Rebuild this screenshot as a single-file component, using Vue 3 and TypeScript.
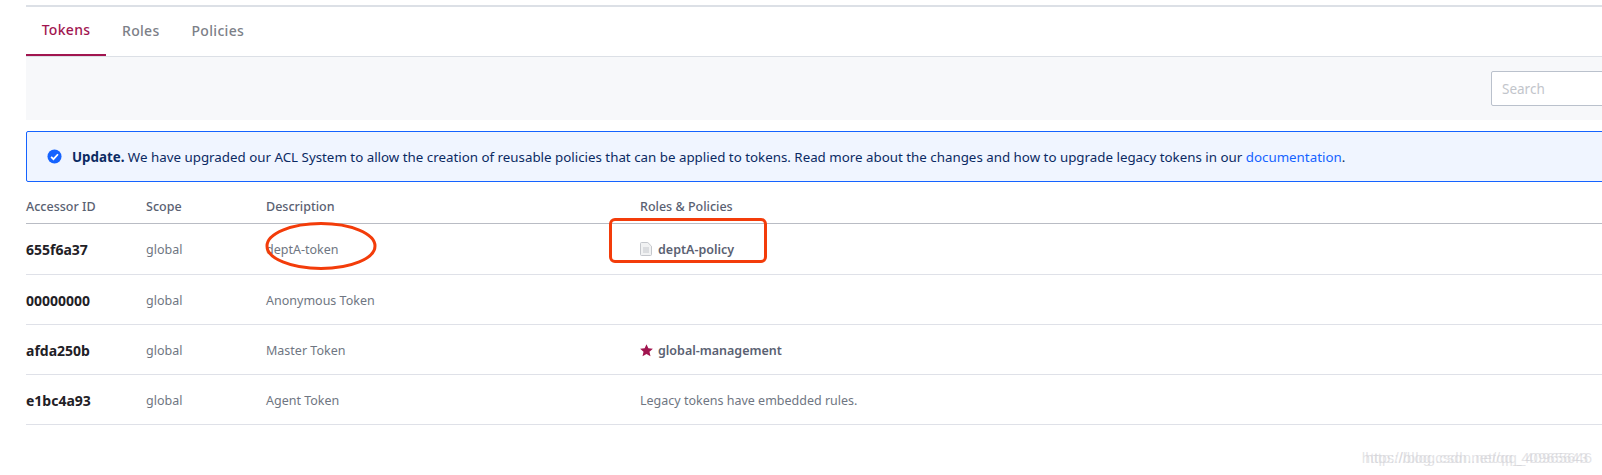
<script setup lang="ts">
interface TokenRow {
  id: string
  scope: string
  description: string
  policy?: string
  icon?: 'policy' | 'star'
  note?: string
}

const rows: TokenRow[] = [
  { id: '655f6a37', scope: 'global', description: 'deptA-token', policy: 'deptA-policy', icon: 'policy' },
  { id: '00000000', scope: 'global', description: 'Anonymous Token' },
  { id: 'afda250b', scope: 'global', description: 'Master Token', policy: 'global-management', icon: 'star' },
  { id: 'e1bc4a93', scope: 'global', description: 'Agent Token', note: 'Legacy tokens have embedded rules.' },
]
</script>

<template>
  <div class="page">
    <nav class="tabs">
      <a class="tab active">Tokens</a>
      <a class="tab">Roles</a>
      <a class="tab">Policies</a>
    </nav>
    <div class="toolbar">
      <input class="search" type="text" placeholder="Search" />
    </div>
    <div class="notice">
      <svg class="notice-icon" viewBox="0 0 16 16" width="15" height="15">
        <circle cx="8" cy="8" r="7.5" fill="#1563ff" />
        <path d="M4.4 8.3l2.5 2.5 4.8-5.2" fill="none" stroke="#fff" stroke-width="1.9" />
      </svg>
      <p><strong>Update.</strong> We have upgraded our ACL System to allow the creation of reusable policies that can be applied to tokens. Read more about the changes and how to upgrade legacy tokens in our <a>documentation</a>.</p>
    </div>
    <div class="table">
      <div class="row head">
        <div>Accessor ID</div>
        <div>Scope</div>
        <div>Description</div>
        <div>Roles &amp; Policies</div>
      </div>
      <div v-for="row in rows" :key="row.id" class="row">
        <div class="id">{{ row.id }}</div>
        <div>{{ row.scope }}</div>
        <div>{{ row.description }}</div>
        <div v-if="row.policy" class="policy">
          <svg v-if="row.icon === 'policy'" viewBox="0 0 12 14" width="12" height="14">
            <path d="M1.5.5h6.3l3.7 3.7v8.3a1 1 0 0 1-1 1h-9a1 1 0 0 1-1-1v-11a1 1 0 0 1 1-1z" fill="#f1f2f3" stroke="#c4c7cc" />
            <path d="M3 6h6M3 8h6M3 10h6" stroke="#c4c7cc" fill="none" />
          </svg>
          <svg v-else viewBox="0 0 14 14" width="13" height="13" class="star">
            <path d="M7 .2l2 4.5 4.9.5-3.7 3.2 1.1 4.9L7 10.8l-4.3 2.5 1.1-4.9L.1 5.2 5 4.7z" fill="#a1154f" />
          </svg>
          <span>{{ row.policy }}</span>
        </div>
        <div v-else>{{ row.note }}</div>
      </div>
    </div>

    <!-- hand drawn marks on top of the screenshot -->
    <svg class="ellipse" width="114" height="52" viewBox="0 0 114 52">
      <ellipse cx="57" cy="26" rx="54" ry="22.5" fill="none" stroke="#f33c0a" stroke-width="3" />
    </svg>
    <div class="mark"></div>
    <div class="watermark">https://blog.csdn.net/qq_40965646</div>
    <div class="watermark second">http://blog.csdn.net/qq_40965643</div>
  </div>
</template>

<style scoped>
.page {
  position: relative;
  width: 1602px;
  height: 475px;
  overflow: hidden;
  box-sizing: border-box;
  padding: 5px 0 0 26px;
  font-family: "Noto Sans", sans-serif;
  font-size: 12.5px;
  color: #6f7682;
  background: #fff;
}

.tabs {
  display: flex;
  width: 1600px;
  height: 52px;
  border-top: 2px solid #dce0e6;
  border-bottom: 1px solid #dce0e6;
  box-sizing: border-box;
}

.tab {
  display: flex;
  align-items: center;
  justify-content: center;
  height: 49px;
  box-sizing: border-box;
  padding: 0 16px 2px;
  font-size: 14px;
  font-weight: 500;
  letter-spacing: 0.3px;
  color: #7c8088;
}

.tab.active {
  width: 80px;
  color: #a1154f;
  border-bottom: 2px solid #a1154f;
}

.toolbar {
  display: flex;
  align-items: center;
  width: 1600px;
  height: 63px;
  padding-left: 1465px;
  box-sizing: border-box;
  background: #f7f8fa;
}

.search {
  width: 200px;
  height: 35px;
  box-sizing: border-box;
  padding: 0 10px;
  border: 1px solid #bac1cc;
  border-radius: 2px;
  background: #fff;
  font: inherit;
  font-size: 13.5px;
  flex-shrink: 0;
}

.search::placeholder {
  color: #c2c5cb;
}

.notice {
  display: flex;
  align-items: center;
  gap: 10px;
  width: 1600px;
  height: 51px;
  box-sizing: border-box;
  margin-top: 11px;
  padding-left: 20px;
  border: 1px solid #1563ff;
  border-radius: 2px;
  background: #f0f5ff;
  font-size: 13.34px;
  color: #0b2a63;
}

.notice p {
  margin: 0;
  white-space: nowrap;
}

.notice strong {
  font-weight: 700;
}

.notice a {
  color: #1563ff;
}

.table {
  width: 1600px;
  margin-top: 9px;
}

.row {
  display: grid;
  grid-template-columns: 120px 120px 374px 1fr;
  align-items: center;
  height: 50px;
  padding-top: 1px;
  border-bottom: 1px solid #dfe1e8;
  box-sizing: border-box;
}

.row:nth-child(2) {
  height: 51px;
  padding-top: 0;
}

.row.head {
  height: 33px;
  padding: 0 0 2px;
  border-bottom-color: #b9bcc4;
  font-weight: 500;
  color: #5a6172;
}

.id {
  font-weight: 700;
  color: #1f2126;
  font-size: 14px;
}

.policy {
  display: flex;
  align-items: center;
  gap: 6px;
  font-weight: 600;
  color: #5a6172;
}

.star {
  margin-right: -1px;
}

.ellipse {
  position: absolute;
  left: 264px;
  top: 220px;
}

.mark {
  position: absolute;
  left: 609px;
  top: 218px;
  width: 158px;
  height: 45px;
  box-sizing: border-box;
  border: 3px solid #f33c0a;
  border-radius: 6px;
}

.watermark {
  position: absolute;
  right: 10px;
  top: 449px;
  font-family: "Liberation Sans", sans-serif;
  font-size: 15px;
  color: rgba(205, 205, 210, 0.55);
  white-space: nowrap;
}

.watermark.second {
  right: 14px;
}
</style>
